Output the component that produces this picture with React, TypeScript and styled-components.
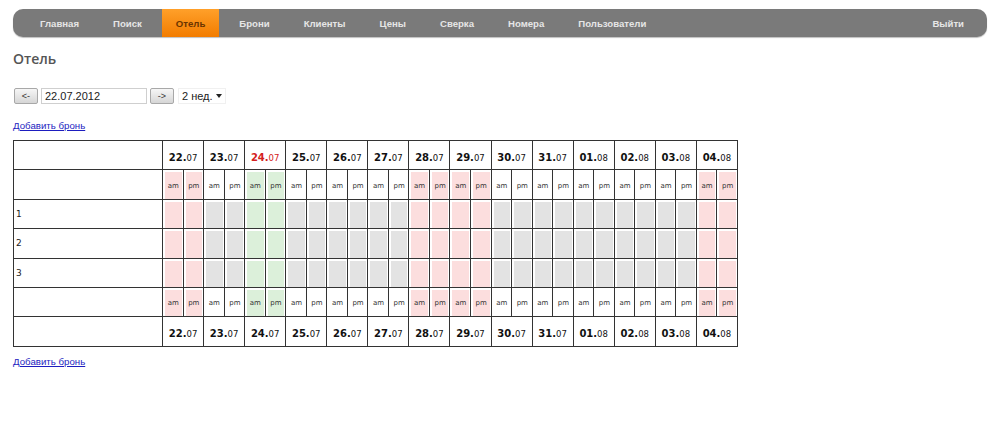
import React from 'react';
import styled, { createGlobalStyle, css } from 'styled-components';

const GlobalStyle = createGlobalStyle`
  html, body {
    margin: 0;
    padding: 0;
    background: #fff;
  }
  body {
    font-family: "DejaVu Sans", Verdana, sans-serif;
    color: #222;
  }
`;

type Tone = 'plain' | 'busy' | 'weekend' | 'today';

const toneColor: Record<Tone, string> = {
  plain: '#ffffff',
  busy: '#e3e3e3',
  weekend: '#fcdede',
  today: '#dcf0da',
};

const Page = styled.div`
  padding: 9px 13px 20px 13px;
`;

const NavBar = styled.nav`
  display: flex;
  align-items: stretch;
  height: 28px;
  padding: 0 6px 0 10px;
  background: #7a7a7a;
  border-radius: 10px;
  box-shadow: 0 1px 1px rgba(0, 0, 0, 0.25);
`;

const NavItem = styled.a<{ $active?: boolean }>`
  display: flex;
  align-items: center;
  padding: 0 14px;
  margin: 0 3px;
  font-family: "Liberation Sans", Arial, sans-serif;
  font-size: 9.6px;
  font-weight: bold;
  color: #e6e6e6;
  text-decoration: none;
  white-space: nowrap;
  ${(p) =>
    p.$active &&
    css`
      background: linear-gradient(#ffa02a, #f27c00);
      color: #6b3400;
    `}
`;

const Spacer = styled.div`
  flex: 1;
`;

const Title = styled.h1`
  margin: 12px 0 0 0;
  font-family: "Open Sans", sans-serif;
  font-size: 14px;
  font-weight: 600;
  color: #555;
`;

const Controls = styled.div`
  display: flex;
  align-items: center;
  gap: 3px;
  margin: 19px 0 0 1px;
  height: 17px;
`;

const ArrowButton = styled.button`
  width: 24px;
  height: 16px;
  padding: 0;
  border: 1px solid #a8a8a8;
  border-radius: 2px;
  background: linear-gradient(#f6f6f6, #d6d6d6);
  font-family: "Liberation Sans", Arial, sans-serif;
  font-size: 9px;
  color: #333;
`;

const DateInput = styled.input`
  box-sizing: border-box;
  width: 106px;
  height: 16px;
  padding: 0 3px;
  border: 1px solid #cfcfcf;
  font-family: "Liberation Sans", Arial, sans-serif;
  font-size: 11px;
  color: #222;
  outline: none;
`;

const Select = styled.div`
  display: flex;
  align-items: center;
  justify-content: space-between;
  box-sizing: border-box;
  width: 48px;
  height: 16px;
  margin-left: 1px;
  padding: 0 3px;
  background: #fff;
  border: 1px solid #f0f0f0;
  font-family: "Liberation Sans", Arial, sans-serif;
  font-size: 11px;
  color: #222;
`;

const Caret = styled.span`
  width: 0;
  height: 0;
  border-left: 3px solid transparent;
  border-right: 3px solid transparent;
  border-top: 4px solid #222;
`;

const AddLink = styled.a`
  display: inline-block;
  font-family: "Liberation Sans", Arial, sans-serif;
  font-size: 9.7px;
  color: #1d1dbf;
  text-decoration: underline;
`;

const TopLink = styled(AddLink)`
  margin-top: 16px;
`;

const BottomLink = styled(AddLink)`
  margin-top: 9px;
`;

const Grid = styled.table`
  margin-top: 7px;
  width: 725px;
  border-collapse: collapse;
  table-layout: fixed;
  td {
    border: 1px solid #333;
    padding: 1px 0;
    height: 26.4px;
  }
`;

const LabelCell = styled.td`
  width: 148px;
  vertical-align: middle;
  font-size: 9px;
  color: #222;
  padding-left: 2px !important;
`;

const DayCell = styled.td<{ $today?: boolean }>`
  text-align: center;
  vertical-align: middle;
  color: ${(p) => (p.$today ? '#d42020' : '#111')};
  white-space: nowrap;
`;

const DayNum = styled.span`
  font-size: 10px;
  font-weight: bold;
`;

const MonthNum = styled.span`
  font-size: 8.5px;
`;

const HalfCell = styled.td`
  padding: 2px 1px 0 2px !important;
`;

const Fill = styled.div<{ $tone: Tone }>`
  display: flex;
  align-items: center;
  justify-content: center;
  height: 26.4px;
  background: ${(p) => toneColor[p.$tone]};
  font-size: 7px;
  color: #333;
`;

const days = ['22.07', '23.07', '24.07', '25.07', '26.07', '27.07', '28.07', '29.07', '30.07', '31.07', '01.08', '02.08', '03.08', '04.08'];
const weekend = [0, 6, 7, 13];
const todayIndex = 2;
const rooms = ['1', '2', '3'];

const headTone = (i: number): Tone => (i === todayIndex ? 'today' : weekend.includes(i) ? 'weekend' : 'plain');
const slotTone = (i: number): Tone => (i === todayIndex ? 'today' : weekend.includes(i) ? 'weekend' : 'busy');

const DateRow = ({ markToday }: { markToday: boolean }) => (
  <tr>
    <LabelCell />
    {days.map((d, i) => {
      const [day, month] = d.split('.');
      return (
        <DayCell key={d} colSpan={2} $today={markToday && i === todayIndex}>
          <DayNum>{day}.</DayNum>
          <MonthNum>{month}</MonthNum>
        </DayCell>
      );
    })}
  </tr>
);

const HalfRow = () => (
  <tr>
    <LabelCell />
    {days.flatMap((d, i) =>
      ['am', 'pm'].map((h) => (
        <HalfCell key={d + h}>
          <Fill $tone={headTone(i)}>{h}</Fill>
        </HalfCell>
      ))
    )}
  </tr>
);

const RoomRow = ({ name }: { name: string }) => (
  <tr>
    <LabelCell>{name}</LabelCell>
    {days.flatMap((d, i) =>
      ['am', 'pm'].map((h) => (
        <HalfCell key={d + h}>
          <Fill $tone={slotTone(i)} />
        </HalfCell>
      ))
    )}
  </tr>
);

const navItems = ['Главная', 'Поиск', 'Отель', 'Брони', 'Клиенты', 'Цены', 'Сверка', 'Номера', 'Пользователи'];

export default function App() {
  return (
    <Page>
      <GlobalStyle />
      <NavBar>
        {navItems.map((n) => (
          <NavItem key={n} $active={n === 'Отель'}>
            {n}
          </NavItem>
        ))}
        <Spacer />
        <NavItem>Выйти</NavItem>
      </NavBar>
      <Title>Отель</Title>
      <Controls>
        <ArrowButton>&lt;-</ArrowButton>
        <DateInput defaultValue="22.07.2012" />
        <ArrowButton>-&gt;</ArrowButton>
        <Select>
          2 нед.
          <Caret />
        </Select>
      </Controls>
      <TopLink href="#">Добавить бронь</TopLink>
      <Grid>
        <colgroup>
          <col style={{ width: 149 }} />
        </colgroup>
        <tbody>
          <DateRow markToday />
          <HalfRow />
          {rooms.map((r) => (
            <RoomRow key={r} name={r} />
          ))}
          <HalfRow />
          <DateRow markToday={false} />
        </tbody>
      </Grid>
      <BottomLink href="#">Добавить бронь</BottomLink>
    </Page>
  );
}
